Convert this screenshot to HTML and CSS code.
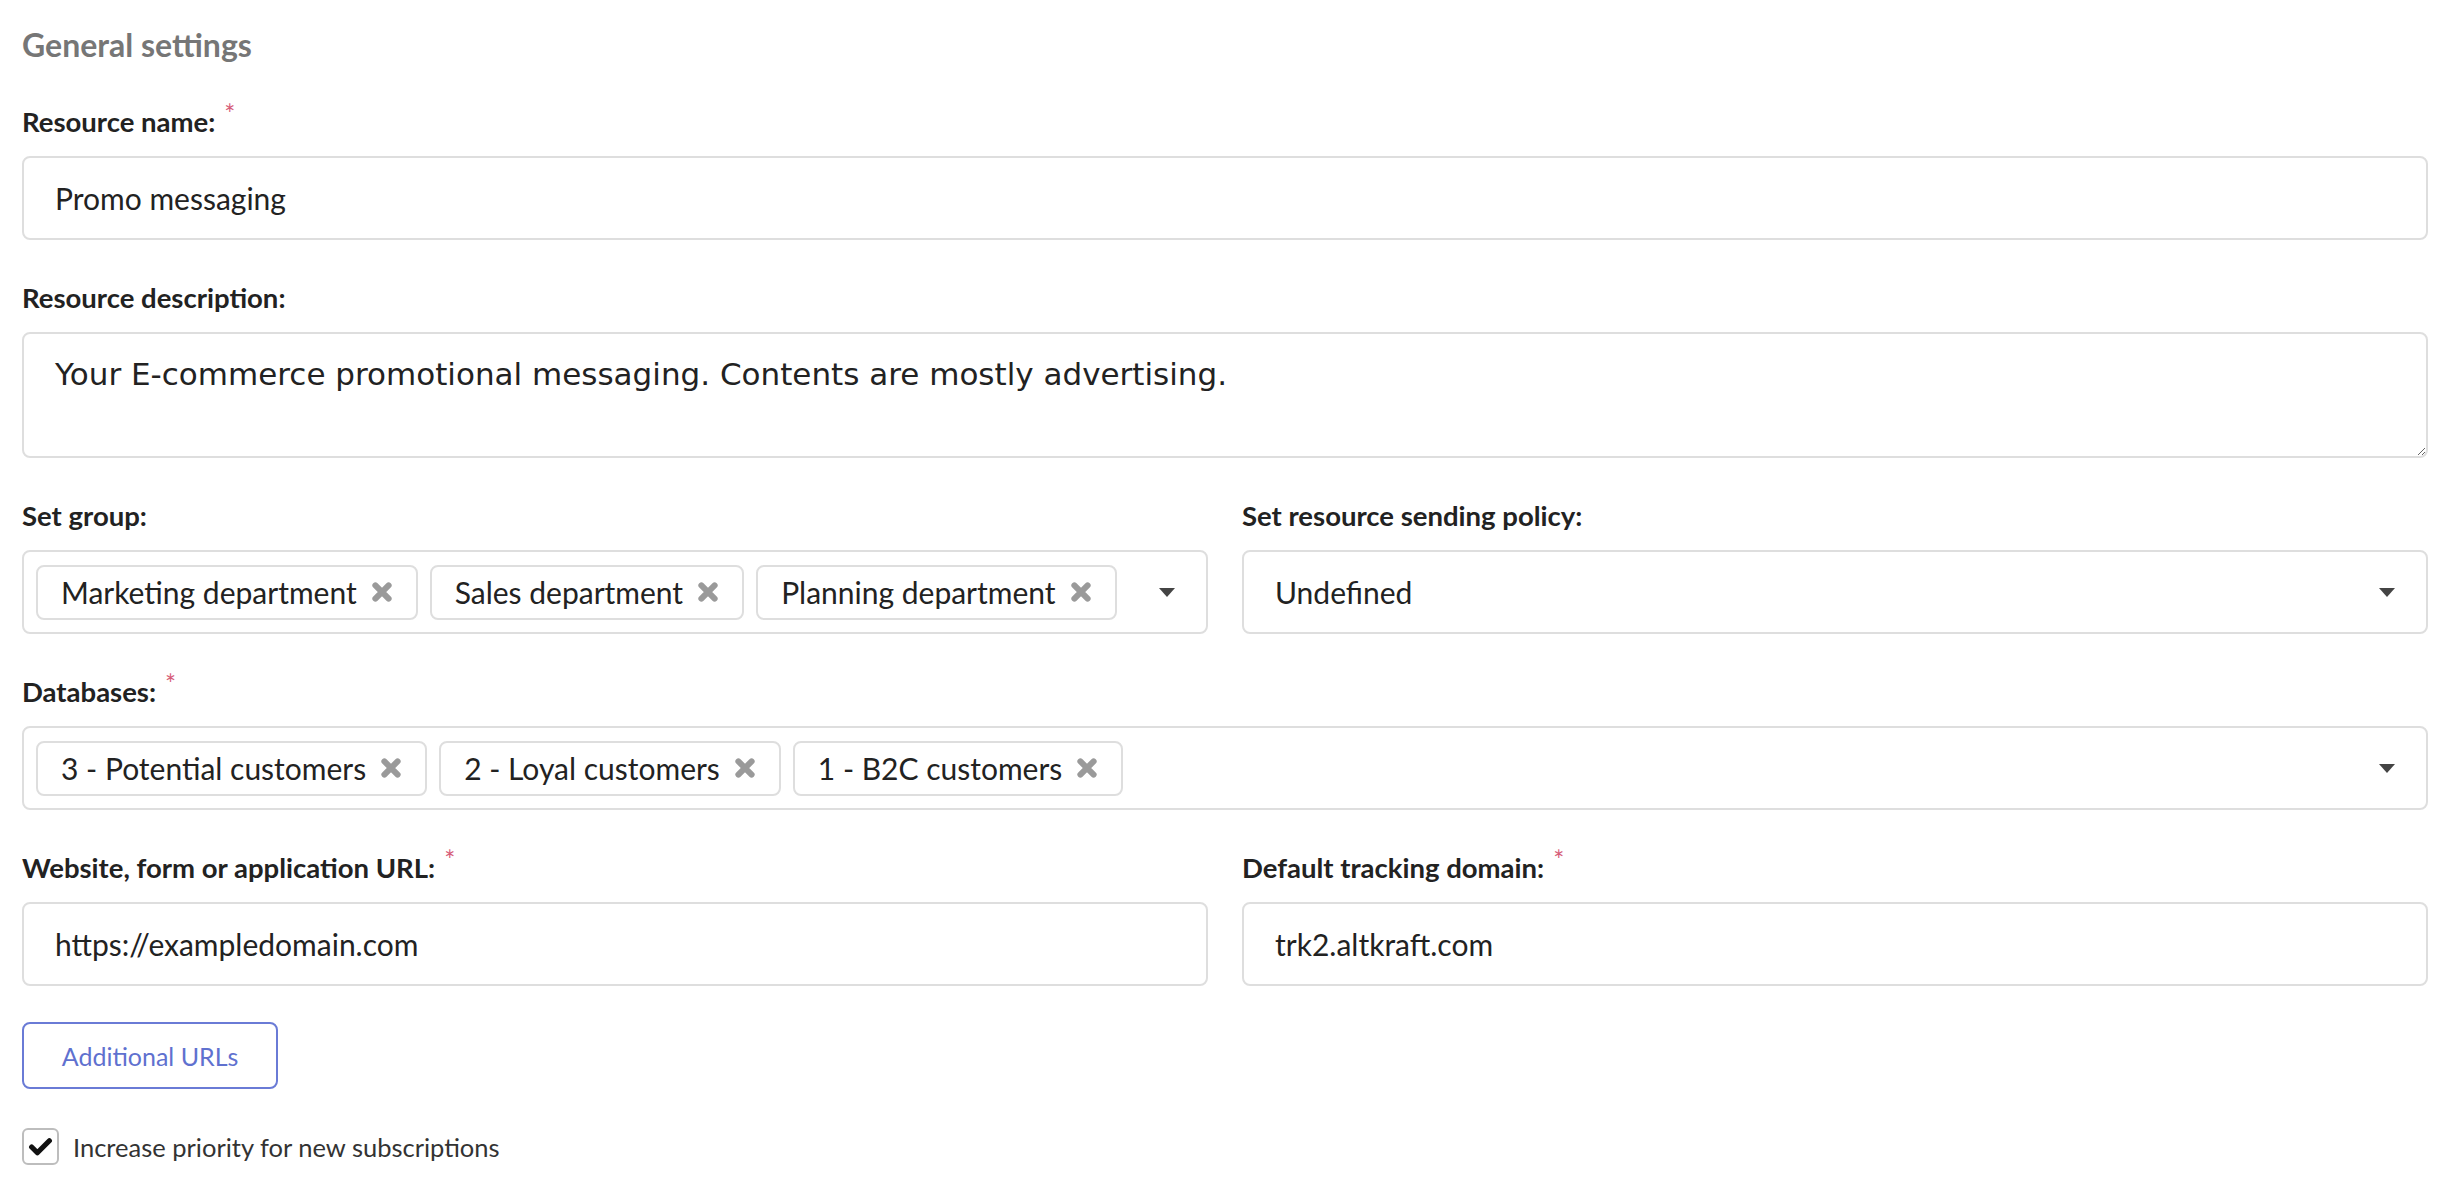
FILE: index.html
```html
<!DOCTYPE html>
<html lang="en">
<head>
<meta charset="utf-8">
<title>General settings</title>
<link rel="stylesheet" href="styles.css">
</head>
<body>
<main class="page">
  <h2 class="section-title">General settings</h2>

  <div class="field">
    <label class="label">Resource name:<span class="req">*</span></label>
    <input class="input" type="text" value="Promo messaging">
  </div>

  <div class="field">
    <label class="label">Resource description:</label>
    <textarea class="textarea">Your E-commerce promotional messaging. Contents are mostly advertising.</textarea>
  </div>

  <div class="row field">
    <div class="col">
      <label class="label">Set group:</label>
      <div class="multiselect">
        <span class="tag">Marketing department<svg class="tag-x" viewBox="0 0 20 20"><path d="M4 4 L16 16 M16 4 L4 16"/></svg></span>
        <span class="tag">Sales department<svg class="tag-x" viewBox="0 0 20 20"><path d="M4 4 L16 16 M16 4 L4 16"/></svg></span>
        <span class="tag">Planning department<svg class="tag-x" viewBox="0 0 20 20"><path d="M4 4 L16 16 M16 4 L4 16"/></svg></span>
        <span class="caret"></span>
      </div>
    </div>
    <div class="col">
      <label class="label">Set resource sending policy:</label>
      <div class="select">
        <span class="select-value">Undefined</span>
        <span class="caret"></span>
      </div>
    </div>
  </div>

  <div class="field">
    <label class="label">Databases:<span class="req">*</span></label>
    <div class="multiselect">
      <span class="tag">3 - Potential customers<svg class="tag-x" viewBox="0 0 20 20"><path d="M4 4 L16 16 M16 4 L4 16"/></svg></span>
      <span class="tag">2 - Loyal customers<svg class="tag-x" viewBox="0 0 20 20"><path d="M4 4 L16 16 M16 4 L4 16"/></svg></span>
      <span class="tag">1 - B2C customers<svg class="tag-x" viewBox="0 0 20 20"><path d="M4 4 L16 16 M16 4 L4 16"/></svg></span>
      <span class="caret"></span>
    </div>
  </div>

  <div class="row field field-tight">
    <div class="col">
      <label class="label">Website, form or application URL:<span class="req">*</span></label>
      <input class="input" type="text" value="https://exampledomain.com">
    </div>
    <div class="col">
      <label class="label">Default tracking domain:<span class="req">*</span></label>
      <input class="input" type="text" value="trk2.altkraft.com">
    </div>
  </div>

  <button class="btn-outline" type="button">Additional URLs</button>

  <div class="check-row">
    <span class="checkbox"><svg class="check-mark" viewBox="0 0 24 24"><path d="M3.5 12.5 L9 18 L20.5 6.5"/></svg></span>
    <span class="check-label">Increase priority for new subscriptions</span>
  </div>
</main>
</body>
</html>
```
FILE: styles.css
```css
* {
  box-sizing: border-box;
}

html,
body {
  margin: 0;
  background: #ffffff;
}

body {
  font-family: Lato, "Noto Sans", sans-serif;
  color: #222222;
}

.page {
  padding: 25px 22px 0;
}

.section-title {
  margin: 0 0 39px;
  font-size: 32px;
  line-height: 40px;
  font-weight: 700;
  color: #767676;
}

.field {
  margin-bottom: 40px;
}

.field-tight {
  margin-bottom: 36px;
}

.row {
  display: grid;
  grid-template-columns: 1fr 1fr;
  column-gap: 34px;
}

.label {
  display: block;
  font-size: 27.5px;
  line-height: 36px;
  font-weight: 700;
  color: #222222;
  margin-bottom: 16px;
}

.req {
  display: inline-block;
  vertical-align: top;
  margin-left: 9px;
  font-size: 26px;
  line-height: 20px;
  font-weight: 400;
  color: #d65c78;
}

.input {
  display: block;
  width: 100%;
  height: 84px;
  padding: 0 31px;
  border: 2px solid #dedede;
  border-radius: 8px;
  background: #ffffff;
  font-family: Lato, "Noto Sans", sans-serif;
  font-size: 30px;
  color: #222222;
  outline: none;
}

.textarea {
  display: block;
  width: 100%;
  height: 126px;
  padding: 21px 31px;
  border: 2px solid #dedede;
  border-radius: 8px;
  background: #ffffff;
  font-family: "DejaVu Sans", sans-serif;
  font-size: 31px;
  line-height: 38px;
  color: #222222;
  outline: none;
  resize: vertical;
}

.multiselect,
.select {
  display: flex;
  align-items: center;
  height: 84px;
  border: 2px solid #dedede;
  border-radius: 8px;
  background: #ffffff;
}

.multiselect {
  padding: 0 12px;
  gap: 12px;
}

.select {
  padding: 0 12px 0 31px;
}

.select-value {
  font-size: 30px;
  color: #222222;
}

.tag {
  display: inline-flex;
  align-items: center;
  height: 55px;
  padding: 0 23px;
  border: 2px solid #dedede;
  border-radius: 8px;
  font-size: 30px;
  color: #222222;
  white-space: nowrap;
}

.tag-x {
  width: 22px;
  height: 22px;
  margin-left: 14px;
  fill: none;
  stroke: #9a9a9a;
  stroke-width: 5.5;
  stroke-linecap: round;
}

.caret {
  width: 0;
  height: 0;
  margin-left: auto;
  margin-right: 19px;
  border-left: 8px solid transparent;
  border-right: 8px solid transparent;
  border-top: 9px solid #444444;
}

.btn-outline {
  display: flex;
  align-items: center;
  justify-content: center;
  width: 256px;
  height: 67px;
  padding: 0;
  border: 2px solid #6a7bd6;
  border-radius: 8px;
  background: #ffffff;
  font-family: Lato, "Noto Sans", sans-serif;
  font-size: 25px;
  color: #5f71cf;
  cursor: pointer;
}

.check-row {
  display: flex;
  align-items: center;
  gap: 14px;
  margin-top: 39px;
}

.checkbox {
  display: flex;
  align-items: center;
  justify-content: center;
  width: 37px;
  height: 37px;
  border: 2px solid #bdbdbd;
  border-radius: 6px;
  background: #ffffff;
}

.check-mark {
  width: 25px;
  height: 25px;
  fill: none;
  stroke: #111111;
  stroke-width: 5;
  stroke-linecap: round;
  stroke-linejoin: round;
}

.check-label {
  font-size: 25.5px;
  color: #333333;
}
```
